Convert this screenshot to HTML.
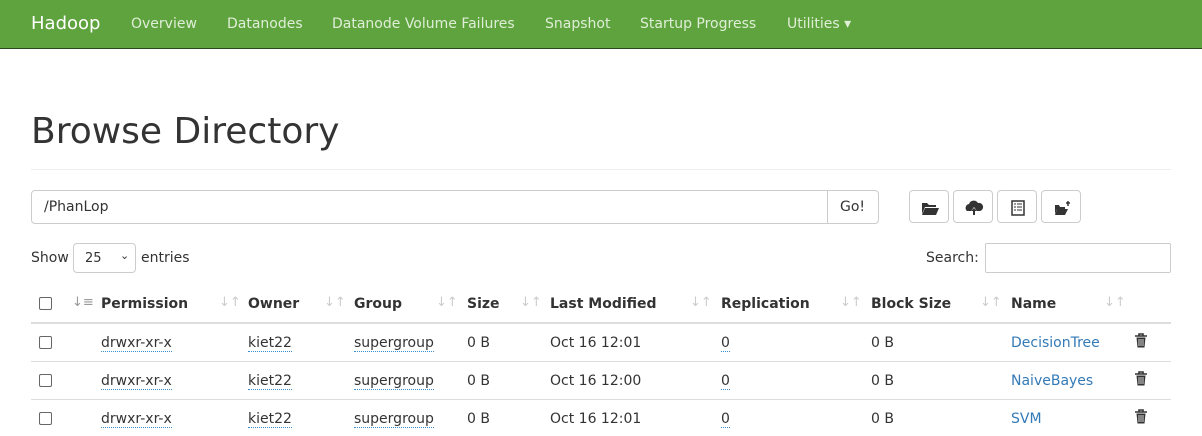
<!DOCTYPE html>
<html><head><style>
*{margin:0;padding:0;box-sizing:border-box}
body{width:1202px;height:436px;overflow:hidden;font-family:"DejaVu Sans","Liberation Sans",sans-serif;font-size:14px;color:#333;background:#fff;position:relative}
.a{position:absolute;white-space:nowrap}
.nav{position:absolute;left:0;top:0;width:1202px;height:49px;background:#5fa33e;border-bottom:1px solid #2b4a1c}
.nav span{position:absolute;top:16px;color:#dfeed7;font-size:14px}
.hr{position:absolute;height:1px;background:#ddd}
.cb{position:absolute;width:13px;height:13px;border:1.5px solid #666;border-radius:2px;left:39px}
.th{font-weight:bold;top:296px}
.si{position:absolute;top:295px;color:#ccc;font-size:13px}
.u{border-bottom:1px dotted #3a8fd0}
.lk{color:#337ab7}
.btn{position:absolute;top:190px;width:40px;height:33px;border:1px solid #ccc;border-radius:4px;background:#fff}
.tr{position:absolute;left:1134px}
</style></head><body>
<div class="nav">
<span style="left:31px;top:13px;font-size:18px;color:#fff">Hadoop</span>
<span style="left:131px">Overview</span>
<span style="left:227px">Datanodes</span>
<span style="left:332px">Datanode Volume Failures</span>
<span style="left:545px">Snapshot</span>
<span style="left:640px">Startup Progress</span>
<span style="left:787px">Utilities ▾</span>
</div>
<div class="a" style="left:31px;top:111px;font-size:36px;font-weight:normal">Browse Directory</div>
<div class="hr" style="left:31px;top:169px;width:1140px;background:#eee"></div>
<div class="a" style="left:31px;top:190px;width:797px;height:34px;border:1px solid #ccc;border-radius:4px 0 0 4px;padding:8px 12px">/PhanLop</div>
<div class="a" style="left:827px;top:190px;width:52px;height:34px;border:1px solid #ccc;border-radius:0 4px 4px 0;padding:8px 12px">Go!</div>
<div class="btn" style="left:909px"><svg width="40" height="33"><path d="M12 12h5l2 2h7v2H15l-3 7z" fill="#333"/><path d="M15 17h14l-3 7H12z" fill="#333"/></svg></div>
<div class="btn" style="left:953px"><svg width="40" height="33"><path d="M13 20a4 4 0 0 1 2-7 5 5 0 0 1 9-1 4 4 0 0 1 2 8h-3l-3-4-3 4z" fill="#333"/><path d="M20 17l3 3h-2v4h-2v-4h-2z" fill="#333"/></svg></div>
<div class="btn" style="left:997px"><svg width="40" height="33"><rect x="14" y="10" width="12" height="14" fill="#fff" stroke="#333" stroke-width="1.5"/><path d="M16 13h2M16 16h2M16 19h2M19 13h5M19 16h5M19 19h5" stroke="#333"/></svg></div>
<div class="btn" style="left:1041px"><svg width="40" height="33"><path d="M13 14h4l1 2h5v2H15l-2 5z" fill="#333"/><path d="M15 18h11l-3 6H13z" fill="#333"/><path d="M26 10v5M24 12h4" stroke="#333" stroke-width="1.5"/></svg></div>
<div class="a" style="left:31px;top:250px">Show</div>
<div class="a" style="left:73px;top:243px;width:63px;height:30px;border:1px solid #ccc;border-radius:4px;font-size:13px;padding:7px 11px">25<span style="position:absolute;left:46px;top:5px;font-size:11px">⌄</span></div>
<div class="a" style="left:141px;top:250px">entries</div>
<div class="a" style="left:926px;top:250px">Search:</div>
<div class="a" style="left:985px;top:243px;width:186px;height:30px;border:1px solid #ccc;border-radius:2px"></div>
<div class="cb" style="top:297px"></div>
<div class="si" style="left:72px;color:#999">↓≡</div>
<div class="a th" style="left:101px">Permission</div><div class="si" style="left:219px">↓↑</div>
<div class="a th" style="left:248px">Owner</div><div class="si" style="left:324px">↓↑</div>
<div class="a th" style="left:354px">Group</div><div class="si" style="left:436px">↓↑</div>
<div class="a th" style="left:467px">Size</div><div class="si" style="left:520px">↓↑</div>
<div class="a th" style="left:550px">Last Modified</div><div class="si" style="left:690px">↓↑</div>
<div class="a th" style="left:721px">Replication</div><div class="si" style="left:840px">↓↑</div>
<div class="a th" style="left:871px">Block Size</div><div class="si" style="left:980px">↓↑</div>
<div class="a th" style="left:1011px">Name</div><div class="si" style="left:1104px">↓↑</div>
<div class="hr" style="left:31px;top:322px;width:1140px;height:2px"></div>
<div class="hr" style="left:31px;top:361px;width:1140px"></div>
<div class="hr" style="left:31px;top:399px;width:1140px"></div>

<div class="cb" style="top:336px"></div><div class="cb" style="top:374px"></div><div class="cb" style="top:412px"></div>

<div class="a" style="left:101px;top:335px"><span class="u">drwxr-xr-x</span></div>
<div class="a" style="left:248px;top:335px"><span class="u">kiet22</span></div>
<div class="a" style="left:354px;top:335px"><span class="u">supergroup</span></div>
<div class="a" style="left:467px;top:335px">0 B</div>
<div class="a" style="left:550px;top:335px">Oct 16 12:01</div>
<div class="a" style="left:721px;top:335px"><span class="u">0</span></div>
<div class="a" style="left:871px;top:335px">0 B</div>
<div class="a lk" style="left:1011px;top:335px">DecisionTree</div>
<svg class="tr" style="top:333px" width="14" height="15"><path d="M1 3h12M5 3V1h4v2" stroke="#333" stroke-width="1.6" fill="none"/><path d="M2.5 4.5h9l-1 10h-7z" fill="#333"/><path d="M5 6v7M7 6v7M9 6v7" stroke="#fff" stroke-width=".8"/></svg>

<div class="a" style="left:101px;top:373px"><span class="u">drwxr-xr-x</span></div>
<div class="a" style="left:248px;top:373px"><span class="u">kiet22</span></div>
<div class="a" style="left:354px;top:373px"><span class="u">supergroup</span></div>
<div class="a" style="left:467px;top:373px">0 B</div>
<div class="a" style="left:550px;top:373px">Oct 16 12:00</div>
<div class="a" style="left:721px;top:373px"><span class="u">0</span></div>
<div class="a" style="left:871px;top:373px">0 B</div>
<div class="a lk" style="left:1011px;top:373px">NaiveBayes</div>
<svg class="tr" style="top:371px" width="14" height="15"><path d="M1 3h12M5 3V1h4v2" stroke="#333" stroke-width="1.6" fill="none"/><path d="M2.5 4.5h9l-1 10h-7z" fill="#333"/><path d="M5 6v7M7 6v7M9 6v7" stroke="#fff" stroke-width=".8"/></svg>

<div class="a" style="left:101px;top:411px"><span class="u">drwxr-xr-x</span></div>
<div class="a" style="left:248px;top:411px"><span class="u">kiet22</span></div>
<div class="a" style="left:354px;top:411px"><span class="u">supergroup</span></div>
<div class="a" style="left:467px;top:411px">0 B</div>
<div class="a" style="left:550px;top:411px">Oct 16 12:01</div>
<div class="a" style="left:721px;top:411px"><span class="u">0</span></div>
<div class="a" style="left:871px;top:411px">0 B</div>
<div class="a lk" style="left:1011px;top:411px">SVM</div>
<svg class="tr" style="top:409px" width="14" height="15"><path d="M1 3h12M5 3V1h4v2" stroke="#333" stroke-width="1.6" fill="none"/><path d="M2.5 4.5h9l-1 10h-7z" fill="#333"/><path d="M5 6v7M7 6v7M9 6v7" stroke="#fff" stroke-width=".8"/></svg>
</body></html>
